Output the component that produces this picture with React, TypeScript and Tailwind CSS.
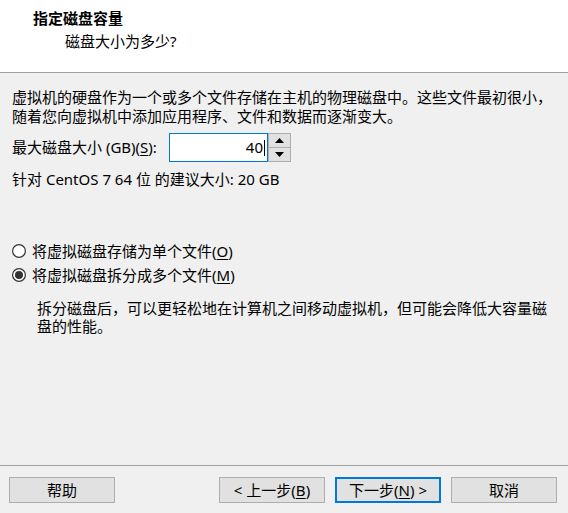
const font = { fontFamily: '"Noto Sans", "Noto Sans CJK SC", sans-serif' };

function Mn({ k }: { k: string }) {
    return (
        <span>
            (<span className="underline underline-offset-2">{k}</span>)
        </span>
    );
}

function Radio({ checked }: { checked?: boolean }) {
    return (
        <svg width="14" height="14" viewBox="0 0 14 14" className="h-[14px] w-[14px] shrink-0">
            <circle cx="7" cy="7" r="6.4" fill="#fff" stroke="#333" strokeWidth="1.2" />
            {checked && <circle cx="7" cy="7" r="4" fill="#333" />}
        </svg>
    );
}

function Btn({ children, primary }: { children: React.ReactNode; primary?: boolean }) {
    return (
        <div
            className={
                'flex h-[26px] w-[106px] items-center justify-center bg-[#e1e1e1] text-[15px] leading-none ' +
                (primary ? 'border-2 border-[#0078d7]' : 'border border-[#adadad]')
            }
        >
            <span>{children}</span>
        </div>
    );
}

function Arrow({ up }: { up?: boolean }) {
    return (
        <svg width="9" height="5" viewBox="0 0 9 5">
            {up ? <polygon points="0,5 9,5 4.5,0" fill="#000" /> : <polygon points="0,0 9,0 4.5,5" fill="#000" />}
        </svg>
    );
}

export default function App() {
    return (
        <div className="flex h-[513px] w-[568px] flex-col bg-[#f0f0f0] text-black" style={font}>
            {/* header */}
            <div className="box-border h-[73px] shrink-0 border-b border-[#a0a0a0] bg-white pt-[8px]">
                <div className="pl-[33px] text-[15px] font-bold leading-[20px]">指定磁盘容量</div>
                <div className="mt-[3px] pl-[65px] text-[15px] leading-[20px]">磁盘大小为多少?</div>
            </div>

            {/* body */}
            <div className="flex-1 px-[12px] pt-[15px] text-[15px]">
                <p className="leading-[19px]">
                    虚拟机的硬盘作为一个或多个文件存储在主机的物理磁盘中。这些文件最初很小，
                    <br />
                    随着您向虚拟机中添加应用程序、文件和数据而逐渐变大。
                </p>

                <div className="mt-[7px] flex h-[29px] items-center">
                    <span className="w-[157px] leading-[19px]">
                        最大磁盘大小 (GB)<Mn k="S" />:
                    </span>
                    <div className="flex h-[29px] w-[99px] items-center justify-end border border-[#0078d7] bg-white pr-[2px]">
                        <span className="leading-none">40</span>
                        <span className="ml-[1px] h-[16px] w-px bg-black" />
                    </div>
                    <div className="flex h-[29px] w-[23px] flex-col border border-[#adadad] bg-[#e1e1e1]">
                        <div className="flex flex-1 items-center justify-center border-b border-[#adadad]">
                            <Arrow up />
                        </div>
                        <div className="flex flex-1 items-center justify-center">
                            <Arrow />
                        </div>
                    </div>
                </div>

                <p className="mt-[8px] leading-[19px]">针对 CentOS 7 64 位 的建议大小: 20 GB</p>

                <div className="mt-[52px] flex h-[20px] items-center gap-[6px]">
                    <Radio />
                    <span className="leading-[20px]">
                        将虚拟磁盘存储为单个文件<Mn k="O" />
                    </span>
                </div>
                <div className="mt-[4px] flex h-[20px] items-center gap-[6px]">
                    <Radio checked />
                    <span className="leading-[20px]">
                        将虚拟磁盘拆分成多个文件<Mn k="M" />
                    </span>
                </div>
                <p className="mt-[14px] pl-[25px] pr-[8px] leading-[18px]">
                    拆分磁盘后，可以更轻松地在计算机之间移动虚拟机，但可能会降低大容量磁盘的性能。
                </p>
            </div>

            {/* footer */}
            <div className="box-border flex h-[48px] shrink-0 items-start border-t border-[#a0a0a0] pt-[11px] pl-[9px] pr-[11px]">
                <Btn>帮助</Btn>
                <div className="flex-1" />
                <div className="flex gap-[10px]">
                    <Btn>
                        &lt; 上一步<Mn k="B" />
                    </Btn>
                    <Btn primary>
                        下一步<Mn k="N" /> &gt;
                    </Btn>
                    <Btn>取消</Btn>
                </div>
            </div>
        </div>
    );
}
